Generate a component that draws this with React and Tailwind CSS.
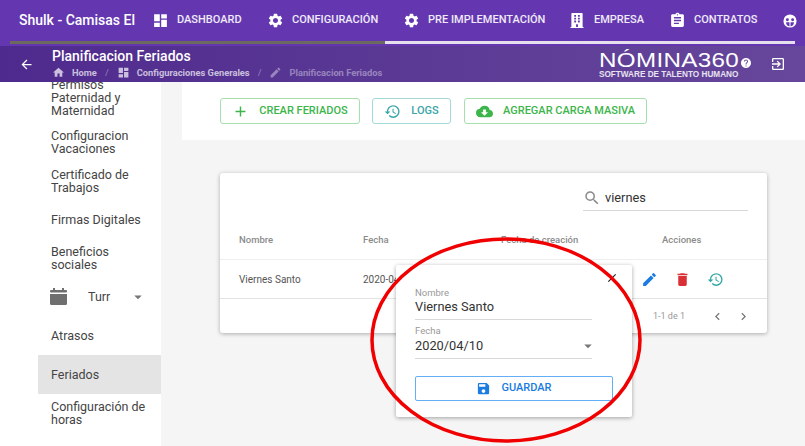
import React from 'react';
import {
  MdDashboard, MdSettings, MdAssignment, MdArrowBack, MdHome, MdEdit,
  MdExitToApp, MdAdd, MdHistory, MdCloudDownload, MdSave, MdDelete, MdSearch,
  MdChevronLeft, MdChevronRight, MdHelp, MdClose, MdArrowDropDown
} from 'react-icons/md';
import { FaBuilding } from 'react-icons/fa';

const tabs = [
  { label: 'DASHBOARD', icon: MdDashboard, w: 'w-[115px]' },
  { label: 'CONFIGURACIÓN', icon: MdSettings, w: 'w-[136px]' },
  { label: 'PRE IMPLEMENTACIÓN', icon: MdSettings, w: 'w-[166px]' },
  { label: 'EMPRESA', icon: FaBuilding, w: 'w-[100px]' },
  { label: 'CONTRATOS', icon: MdAssignment, w: 'w-[113px]' },
];

function Breadcrumb({ icon: Icon, children, dim }) {
  return (
    <span className={`flex items-center gap-[7px] font-bold ${dim ? 'text-white/40' : 'text-white/70'}`}>
      <Icon className="w-[13px] h-[13px]" />
      {children}
    </span>
  );
}

function OutlineButton({ icon: Icon, children, color, border, w }) {
  return (
    <button className={`h-[26px] ${w} flex items-center justify-center gap-[10px] rounded-[3px] border bg-white text-[11px] font-medium ${color} ${border}`}>
      <Icon className="w-[17px] h-[17px]" />
      {children}
    </button>
  );
}

function CalendarIcon() {
  return (
    <svg viewBox="0 0 18 17" className="w-[18px] h-[17px] text-[#6f6f6f]" fill="currentColor">
      <rect x="3" y="0" width="2" height="3" />
      <rect x="12" y="0" width="2" height="3" />
      <rect x="0" y="2" width="17" height="2.5" rx="1" />
      <path d="M0 6h17v9.5a1.5 1.5 0 0 1-1.5 1.5h-14A1.5 1.5 0 0 1 0 15.5z" />
    </svg>
  );
}

function FaceIcon() {
  return (
    <svg viewBox="0 0 16 16" className="w-[14px] h-[14px]">
      <circle cx="8" cy="8" r="7.5" fill="#fff" />
      <circle cx="5" cy="6.5" r="1.7" fill="#6437b1" />
      <circle cx="11" cy="6.5" r="1.7" fill="#6437b1" />
      <path d="M3.5 9.5h9a4.5 4.5 0 0 1-9 0z" fill="#6437b1" />
      <rect x="7.4" y="9" width="1.2" height="5" fill="#fff" />
    </svg>
  );
}

export default function App() {
  return (
    <div className="relative w-[805px] h-[446px] overflow-hidden bg-[#f5f5f5] font-['Roboto',sans-serif]">
      {/* Top tabs */}
      <header className="h-[46px] bg-[#6437b1] text-white">
        <div className="h-[41px] flex items-center">
          <span className="w-[153px] pl-[19px] text-[14px] font-medium whitespace-nowrap">Shulk - Camisas El</span>
          {tabs.map(t => (
            <span key={t.label} className={`${t.w} flex items-center gap-[10px] text-[11px] font-medium whitespace-nowrap text-white/90`}>
              <span className="w-[14px] flex justify-center shrink-0">
                <t.icon className={t.icon === FaBuilding ? 'w-[14px] h-[15px] text-white shrink-0' : 'w-[17px] h-[17px] text-white shrink-0'} />
              </span>
              {t.label}
            </span>
          ))}
          <FaceIcon />
        </div>
        <div className="h-[3px] mx-[10px] flex">
          <div className="w-[375px] bg-[#6c6a5e]" />
          <div className="flex-1 bg-[#e6e0ee]" />
        </div>
      </header>

      {/* Page title bar */}
      <div className="relative z-10 h-[36px] flex items-center bg-gradient-to-r from-[#4f2a8e] to-[#66479b] text-white">
        <MdArrowBack className="w-[15px] h-[15px] ml-[19px]" />
        <div className="ml-[18px] flex-1">
          <h1 className="text-[14px] leading-[15px] font-medium">Planificacion Feriados</h1>
          <div className="mt-[2px] flex items-center gap-[8px] text-[9.3px] leading-[12px]">
            <Breadcrumb icon={MdHome}>Home</Breadcrumb>
            <span className="text-white/40">/</span>
            <Breadcrumb icon={MdDashboard}>Configuraciones Generales</Breadcrumb>
            <span className="text-white/40">/</span>
            <Breadcrumb icon={MdEdit} dim>Planificacion Feriados</Breadcrumb>
          </div>
        </div>
        <div className="relative w-[155px] mr-[16px]">
          <div className="font-['Liberation_Sans',sans-serif] text-[21px] h-[20px] leading-[20px] tracking-[0.3px] whitespace-nowrap scale-x-[1.15] origin-left">NÓMINA360</div>
          <div className="mt-[1px] font-['Liberation_Sans',sans-serif] font-bold text-[8.2px] h-[8px] leading-[8px] whitespace-nowrap text-white/85">SOFTWARE DE TALENTO HUMANO</div>
          <MdHelp className="absolute left-[141px] top-[7px] w-[12px] h-[12px]" />
        </div>
        <MdExitToApp className="w-[16px] h-[16px] mr-[19px]" />
      </div>

      <div className="flex h-[364px]">
        {/* Sidebar */}
        <aside className="w-[182px] shrink-0 h-full overflow-hidden">
          <nav className="w-[161px] h-full bg-white text-[12.5px] leading-[13px] text-[#444] overflow-hidden">
            <div className="pl-[51px] -mt-[4px] w-[135px]">Permisos Paternidad y Maternidad</div>
            <div className="pl-[51px] w-[140px] mt-[12px]">Configuracion Vacaciones</div>
            <div className="pl-[51px] w-[140px] mt-[13px]">Certificado de Trabajos</div>
            <div className="pl-[51px] mt-[19px] whitespace-nowrap">Firmas Digitales</div>
            <div className="pl-[51px] w-[130px] mt-[19px]">Beneficios sociales</div>
            <div className="pl-[50px] mt-[6px] h-[39px] flex items-center">
              <CalendarIcon />
              <span className="ml-[20px]">Turr</span>
              <MdArrowDropDown className="w-[18px] h-[18px] ml-[19px] text-[#777]" />
            </div>
            <div className="ml-[38px] h-[39px] pl-[13px] flex items-center">Atrasos</div>
            <div className="ml-[38px] h-[39px] pl-[13px] flex items-center bg-[#e4e4e4]">Feriados</div>
            <div className="pl-[51px] w-[155px] mt-[6px]">Configuración de horas</div>
          </nav>
        </aside>

        {/* Main */}
        <main className="flex-1 min-w-0">
          <div className="h-[58px] bg-white pl-[38px] pt-[16px] flex gap-[12px]">
            <OutlineButton icon={MdAdd} color="text-[#3cb54a]" border="border-[#a5dfb0]" w="w-[140px]">CREAR FERIADOS</OutlineButton>
            <OutlineButton icon={MdHistory} color="text-[#3aa5a5]" border="border-[#a3d9d9]" w="w-[79px]">LOGS</OutlineButton>
            <OutlineButton icon={MdCloudDownload} color="text-[#3cb54a]" border="border-[#a5dfb0]" w="w-[183px] ml-[1px]">AGREGAR CARGA MASIVA</OutlineButton>
          </div>

          <section className="ml-[38px] mt-[33px] w-[547px] h-[160px] bg-white rounded-[3px] shadow-[0_1px_4px_rgba(0,0,0,0.3)]">
            <div className="h-[50px] flex justify-end pr-[19px] pt-[11px]">
              <div className="w-[165px] h-[27px] pt-[1px] flex items-center gap-[4px] border-b border-[#d6d6d6] text-[12.8px] text-[#333]">
                <MdSearch className="w-[18px] h-[18px] text-[#8a8a8a]" />
                viernes
              </div>
            </div>
            <div className="h-[37px] pb-[1px] flex items-center border-b border-[#eee] text-[9.5px] font-medium text-[#8b8b8b]">
              <span className="w-[124px] ml-[19px]">Nombre</span>
              <span className="w-[138px]">Fecha</span>
              <span className="w-[161px]">Fecha de creación</span>
              <span>Acciones</span>
            </div>
            <div className="h-[39px] pt-[1px] flex items-center border-b border-[#e3e3e3] text-[10px] text-[#555]">
              <span className="w-[124px] ml-[19px]">Viernes Santo</span>
              <span className="w-[278px]">2020-04-10</span>
              <MdEdit className="w-[17px] h-[17px] text-[#1a7be0]" />
              <MdDelete className="w-[17px] h-[17px] ml-[16px] text-[#d93035]" />
              <MdHistory className="w-[17px] h-[17px] ml-[16px] text-[#36a9a6]" />
            </div>
            <div className="h-[34px] pt-[1px] flex items-center justify-end pr-[16px] text-[9px] text-[#999]">
              <span>1-1 de 1</span>
              <MdChevronLeft className="w-[15px] h-[15px] ml-[25px] text-[#777]" />
              <MdChevronRight className="w-[15px] h-[15px] ml-[11px] text-[#777]" />
            </div>
          </section>
        </main>
      </div>

      {/* Edit popover */}
      <div className="absolute z-20 left-[396px] top-[265px] w-[236px] h-[152px] bg-white rounded-[2px] shadow-[0_1px_4px_rgba(0,0,0,0.35)] px-[19px] pt-[23px]">
        <MdClose className="absolute right-[13px] top-[6px] w-[14px] h-[14px] text-[#222]" />
        <div className="w-[177px] border-b border-[#d8d8d8] h-[32px]">
          <div className="text-[9.5px] leading-[10px] text-[#999]">Nombre</div>
          <div className="text-[12.8px] leading-[18px] text-[#333]">Viernes Santo</div>
        </div>
        <div className="mt-[6px] w-[177px] border-b border-[#d8d8d8] h-[33px]">
          <div className="text-[9.5px] leading-[10px] text-[#999]">Fecha</div>
          <div className="mt-[1px] flex items-center justify-between text-[12.8px] leading-[18px] text-[#333]">
            2020/04/10
            <MdArrowDropDown className="w-[18px] h-[18px] text-[#777] -mr-[5px]" />
          </div>
        </div>
        <button className="mt-[17px] w-[198px] h-[25px] flex items-center justify-center gap-[10px] rounded-[2px] border border-[#64aef5] text-[11px] font-medium text-[#1a7be0]">
          <MdSave className="w-[15px] h-[15px]" />
          GUARDAR
        </button>
      </div>

      {/* Red annotation drawn over the screenshot */}
      <svg className="absolute z-30 left-0 top-0 pointer-events-none" width="805" height="446" fill="none">
        <ellipse cx="506" cy="340" rx="134" ry="101" stroke="#f00000" strokeWidth="3.5" />
      </svg>
    </div>
  );
}
